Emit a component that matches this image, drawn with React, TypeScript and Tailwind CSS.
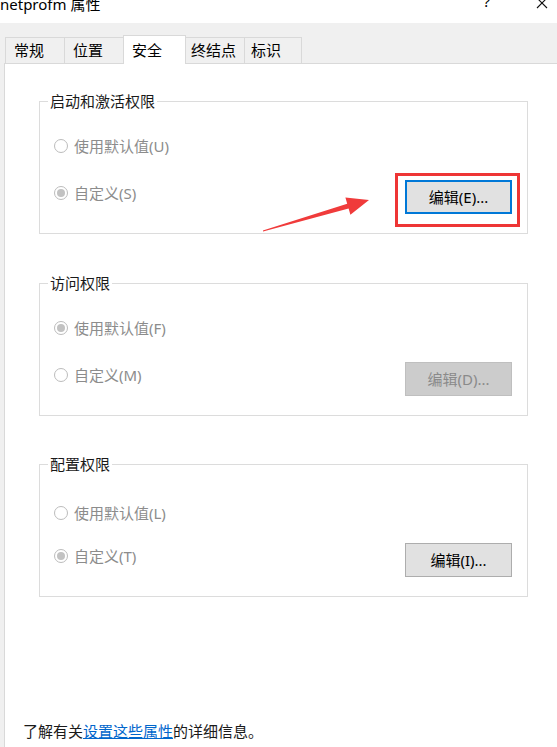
const font = "font-['Noto_Sans','Noto_Sans_CJK_SC',sans-serif]";

function Radio({ checked, label }: { checked?: boolean; label: string }) {
    return (
        <div className="flex items-center h-5">
            <span className="w-[14px] h-[14px] rounded-full border border-[#bcbcbc] bg-white flex items-center justify-center">
                {checked && <span className="w-[8px] h-[8px] rounded-full bg-[#c2c2c2]" />}
            </span>
            <span className="ml-[6px] text-[15px] leading-5 text-[#8c8c8c]">{label}</span>
        </div>
    );
}

function Tab({ label, selected, className }: { label: string; selected?: boolean; className: string }) {
    return (
        <div
            className={
                selected
                    ? `relative z-10 h-[29px] -mb-px bg-white border-l border-t border-r border-[#d9d9d9] flex items-center text-[15px] text-black ${className}`
                    : `h-[26px] bg-[#f0f0f0] border-t border-[#d9d9d9] flex items-center text-[15px] text-black ${className}`
            }
        >
            {label}
        </div>
    );
}

type BtnKind = 'focus' | 'normal' | 'disabled';

function Button({ label, kind }: { label: string; kind: BtnKind }) {
    if (kind === 'focus') {
        return (
            <div className="relative">
                <div className="w-[107px] h-[34px] border-2 border-[#0078d7] bg-[#e1e1e1] flex items-center justify-center text-[15px] text-black">
                    {label}
                </div>
                {/* red annotation box */}
                <div className="absolute -left-[10px] -top-[7px] -right-[8px] -bottom-[13px] border-[3px] border-[#ee3535]" />
            </div>
        );
    }
    if (kind === 'disabled') {
        return (
            <div className="w-[107px] h-[34px] border border-[#bfbfbf] bg-[#cccccc] flex items-center justify-center text-[15px] text-[#8a8a8a]">
                {label}
            </div>
        );
    }
    return (
        <div className="w-[107px] h-[34px] border border-[#adadad] bg-[#e1e1e1] flex items-center justify-center text-[15px] text-black">
            {label}
        </div>
    );
}

function Group({
    title,
    first,
    second,
    checkedFirst,
    button,
    kind,
    className,
    row1,
    row2,
}: {
    title: string;
    first: string;
    second: string;
    checkedFirst?: boolean;
    button: string;
    kind: BtnKind;
    className: string;
    row1: string;
    row2: string;
}) {
    return (
        <fieldset className={`ml-[34px] w-[489px] border border-[#dcdcdc] pb-[19px] ${className}`}>
            <legend className="ml-[8px] px-[2px] text-[15px] leading-5 text-[#1a1a1a]">{title}</legend>
            <div className={`pl-[14px] ${row1}`}>
                <Radio checked={checkedFirst} label={first} />
            </div>
            <div className={`pl-[14px] pr-[15px] flex justify-between items-start ${row2}`}>
                <div className="mt-[3px]">
                    <Radio checked={!checkedFirst} label={second} />
                </div>
                <Button label={button} kind={kind} />
            </div>
        </fieldset>
    );
}

export default function App() {
    return (
        <div className={`relative w-[557px] h-[747px] overflow-hidden bg-[#f0f0f0] flex flex-col ${font}`}>
            {/* Title bar */}
            <div className="h-[23px] bg-white flex items-start overflow-hidden">
                <div className="-mt-[6px] text-[15px] leading-5 text-black">netprofm 属性</div>
                <div className="ml-auto -mt-[9px] text-[15px] leading-5 text-black mr-[46px]">?</div>
                <svg className="-mt-[3px] mr-[9px]" width="12" height="12" viewBox="0 0 12 12">
                    <path d="M1 1 L11 11 M11 1 L1 11" stroke="#111" strokeWidth="1.1" fill="none" />
                </svg>
            </div>

            {/* Tabs + page */}
            <div className="flex-1 flex flex-col pt-[12px]">
                <div className="flex items-end h-[28px] pl-[5px]">
                    <Tab label="常规" className="w-[59px] pl-[8px] border-l" />
                    <Tab label="位置" className="w-[59px] pl-[8px] border-l" />
                    <Tab label="安全" selected className="w-[63px] pl-[8px]" />
                    <Tab label="终结点" className="w-[58px] pl-[5px]" />
                    <Tab label="标识" className="w-[58px] pl-[6px] border-l border-r" />
                </div>

                <div className="flex-1 ml-[4px] bg-white border-l border-t border-[#d9d9d9] flex flex-col">
                    <Group
                        title="启动和激活权限"
                        first="使用默认值(U)"
                        second="自定义(S)"
                        button="编辑(E)..."
                        kind="focus"
                        className="mt-[27px]"
                        row1="mt-[25px]"
                        row2="mt-[24px]"
                    />
                    <Group
                        title="访问权限"
                        first="使用默认值(F)"
                        second="自定义(M)"
                        checkedFirst
                        button="编辑(D)..."
                        kind="disabled"
                        className="mt-[39px]"
                        row1="mt-[25px]"
                        row2="mt-[24px]"
                    />
                    <Group
                        title="配置权限"
                        first="使用默认值(L)"
                        second="自定义(T)"
                        button="编辑(I)..."
                        kind="normal"
                        className="mt-[38px]"
                        row1="mt-[29px]"
                        row2="mt-[20px]"
                    />

                    <div className="mt-[124px] ml-[18px] text-[15px] leading-5 text-[#1a1a1a]">
                        了解有关<span className="text-[#0066cc] underline">设置这些属性</span>的详细信息。
                    </div>
                </div>
            </div>

            {/* red annotation arrow */}
            <svg className="absolute left-0 top-0 pointer-events-none" width="557" height="747" viewBox="0 0 557 747">
                <polygon
                    points="262.9,230.5 347.2,203.8 345.4,197.6 369,200 350.4,214.8 348.6,208.6 263.1,231.5"
                    fill="#f03b3b"
                />
            </svg>
        </div>
    );
}
